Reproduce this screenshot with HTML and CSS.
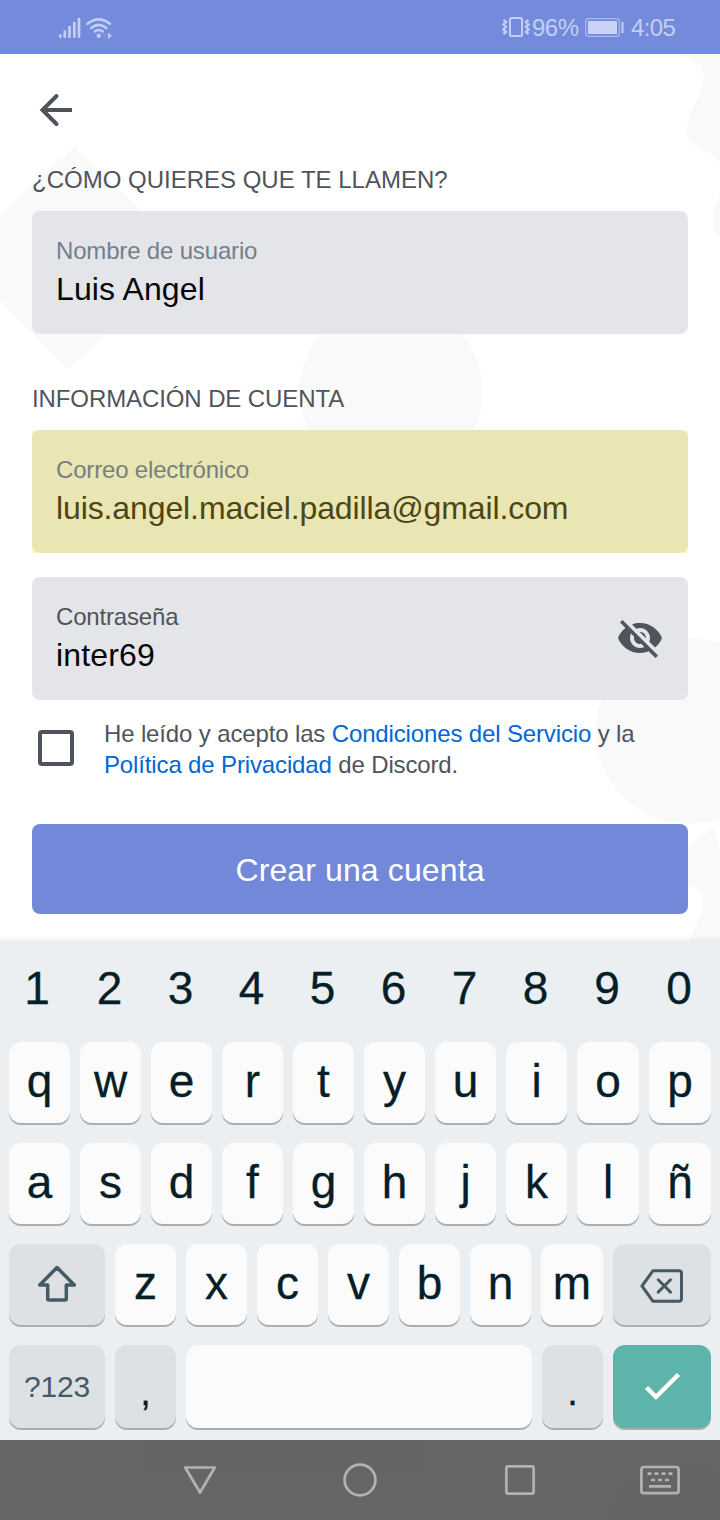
FILE: index.html
```html
<!DOCTYPE html>
<html lang="es">
<head>
<meta charset="utf-8">
<title>Crear una cuenta</title>
<link rel="stylesheet" href="styles.css">
</head>
<body>
<header class="status">
  <svg class="signal" width="56" height="26" viewBox="57 14 56 26" fill="none" stroke="#c3cff4" stroke-linecap="round">
    <path stroke-width="2.7" d="M60.3 34.5v1.2M64.8 30.5v5.2M69.5 26.2v9.5M74.3 22v13.7M79 18.2v17.5"/>
    <path stroke-width="2.6" d="M87.5 22.8q11.3-9 22.3 0M91.2 27q7.7-6.3 15.2 0M94.9 30.4q3.9-2.8 7.7 0"/>
    <circle cx="98.7" cy="34.7" r="2.2" fill="#c3cff4" stroke="none"/>
    <path fill="#c3cff4" stroke="none" d="M108 31.5l3.8 3.2-3.8 3.2z"/>
    <path fill="#8497e0" stroke="none" d="M106.3 31.5l-3.8 3.2 3.8 3.2z"/>
  </svg>
  <div class="status-right">
    <svg width="28" height="24" viewBox="502 15 28 24" fill="none" stroke="#c3cff4" stroke-width="2">
      <rect x="510" y="18" width="12" height="18" rx="1.5"/>
      <path stroke-width="2.4" d="M503.500 20l2.500 2-2.500 2.500 2.500 2.500-2.500 2.500 2.500 2.500-2.500 2M528.500 20l-2.500 2 2.500 2.500-2.500 2.500 2.500 2.500-2.500 2.500 2.500 2"/>
    </svg>
    <span class="percent">96%</span>
    <svg class="battery" width="40" height="22" viewBox="584 16 40 22" fill="none">
      <rect x="585.7" y="18.700" width="33.600" height="17.600" rx="3" stroke="#a9b8ed" stroke-width="1.300"/>
      <rect x="588" y="21" width="29" height="13" fill="#c8d3f5"/>
      <path stroke="#b7c4f1" stroke-width="2.500" d="M622.500 22v11"/>
    </svg>
    <span class="time">4:05</span>
  </div>
</header>
<main class="screen">
  <svg class="shapes" width="720" height="887" viewBox="0 54 720 887" fill="#f9f9f9">
    <path d="M74 147L190 257 68 369-45 257z"/>
    <circle cx="391" cy="392" r="91.500"/>
    <circle cx="689" cy="731" r="93"/>
    <path d="M680 54C698 59 705 66 703.500 79C701 97 687 114 687 130C687 141 694 147 703 150Q713 153 720 163V54z"/>
    <path d="M720 195Q713 206 713 220Q713 232 720 238z"/>
    <path d="M677 854L714 827 720 850V941H690L702 908Q707 890 688 884H677z"/>
  </svg>
  <svg class="back" width="36" height="36" viewBox="38 92 36 36" fill="none" stroke="#4f545c" stroke-width="4">
    <path d="M72 110H43"/><path d="M56.500 96L42.500 110 56.500 124" stroke-linecap="round"/>
  </svg>
  <h2 class="heading heading-name">¿CÓMO QUIERES QUE TE LLAMEN?</h2>
  <section class="field">
    <div class="label">Nombre de usuario</div>
    <div class="value value-name">Luis Angel</div>
  </section>
  <h2 class="heading heading-account">INFORMACIÓN DE CUENTA</h2>
  <div class="autofill">
    <section class="field field-mail">
      <div class="label label-mail">Correo electrónico</div>
      <div class="value value-mail">luis.angel.maciel.padilla@gmail.com</div>
    </section>
  </div>
  <section class="field field-password">
    <div>
      <div class="label label-dark">Contraseña</div>
      <div class="value value-password">inter69</div>
    </div>
    <svg width="48" height="48" viewBox="0 0 24 24" fill="#4f545c">
      <path d="M12 7c2.760 0 5 2.240 5 5 0 .650-.130 1.260-.360 1.830l2.920 2.920c1.510-1.260 2.700-2.890 3.430-4.750-1.730-4.390-6-7.500-11-7.500-1.400 0-2.740.250-3.980.700l2.160 2.160C10.740 7.130 11.350 7 12 7zM2 4.270l2.280 2.280.460.460C3.080 8.300 1.780 10.020 1 12c1.730 4.390 6 7.500 11 7.500 1.550 0 3.030-.300 4.380-.840l.420.420L19.730 22 21 20.730 3.270 3 2 4.270zM7.530 9.800l1.550 1.550c-.050.210-.080.430-.080.650 0 1.660 1.340 3 3 3 .220 0 .440-.030.650-.080l1.550 1.550c-.670.330-1.410.530-2.200.530-2.760 0-5-2.240-5-5 0-.790.200-1.530.530-2.200zm4.310-.780l3.150 3.150.020-.160c0-1.660-1.340-3-3-3l-.170.010z"/>
    </svg>
  </section>
  <div class="terms">
    <span class="checkbox"></span>
    <p class="terms-text">He leído y acepto las <a>Condiciones del Servicio</a> y la<br><a>Política de Privacidad</a> de Discord.</p>
  </div>
  <div class="submit">Crear una cuenta</div>
</main>
<section class="keyboard">
  <div class="row digits"><span class="digit-one">1</span><span>2</span><span>3</span><span>4</span><span>5</span><span>6</span><span>7</span><span>8</span><span>9</span><span>0</span></div>
  <div class="row"><span class="key">q</span><span class="key">w</span><span class="key">e</span><span class="key">r</span><span class="key">t</span><span class="key">y</span><span class="key">u</span><span class="key">i</span><span class="key">o</span><span class="key">p</span></div>
  <div class="row"><span class="key">a</span><span class="key">s</span><span class="key">d</span><span class="key">f</span><span class="key">g</span><span class="key">h</span><span class="key">j</span><span class="key">k</span><span class="key">l</span><span class="key">ñ</span></div>
  <div class="row row-lower">
    <span class="key key-gray"><svg width="42" height="42" viewBox="36 1263 42 42" fill="none" stroke="#455a64" stroke-width="3.500" stroke-linejoin="round"><path d="M57 1267.500L74.300 1285H66.300V1298.500Q66.300 1300 64.800 1300H49.200Q47.700 1300 47.700 1298.500V1285H39.700z"/></svg></span>
    <span class="key">z</span><span class="key">x</span><span class="key">c</span><span class="key">v</span><span class="key">b</span><span class="key">n</span><span class="key">m</span>
    <span class="key key-gray"><svg width="46" height="38" viewBox="639 1267 46 38" fill="none" stroke="#455a64" stroke-width="3" stroke-linejoin="round" stroke-linecap="round"><path d="M653 1270.700H679Q681.500 1270.700 681.500 1273.200V1298.800Q681.500 1301.300 679 1301.300H653L642 1286z"/><path d="M658.200 1279.800L670.500 1292.100M670.500 1279.800L658.200 1292.100"/></svg></span>
  </div>
  <div class="row row-bottom">
    <span class="key key-gray key-symbols">?123</span>
    <span class="key key-gray key-punct">,</span>
    <span class="key"></span>
    <span class="key key-gray key-punct">.</span>
    <span class="key key-enter"><svg width="38" height="30" viewBox="643 1372 38 30" fill="none" stroke="#fff" stroke-width="4.400"><path d="M646.500 1387.500L656 1397 678.500 1374.500"/></svg></span>
  </div>
</section>
<nav class="navbar">
  <svg width="720" height="80" viewBox="0 1440 720 80" fill="none" stroke="#b2b2b2" stroke-width="2.700" stroke-linejoin="round">
    <path fill="#656565" stroke="none" d="M143 1440H428V1472H143zM603 1520Q620 1464 689 1464Q706 1464 720 1469V1520z"/>
    <path d="M185.200 1467.500H214.800L200 1492.500z"/>
    <circle cx="360" cy="1480" r="15.400"/>
    <rect x="506.400" y="1466.400" width="27.200" height="27.200" rx="1"/>
    <rect x="641.400" y="1467" width="37.200" height="26.200" rx="2.500"/>
    <path d="M647.500 1473.700h4m3 0h4m3 0h4m3 0h4M651 1480h4m3 0h4m3 0h4M649 1486.300h22"/>
  </svg>
</nav>
</body>
</html>
```
FILE: styles.css
```css
* { box-sizing: border-box; }
body {
  margin: 0;
  width: 720px;
  height: 1520px;
  overflow: hidden;
  background: #fff;
  font-family: "Liberation Sans", Arial, sans-serif;
  font-size: 24px;
}
svg { display: block; flex: none; }
.status {
  height: 54px;
  padding: 0 44px 0 57px;
  display: flex;
  align-items: center;
  justify-content: space-between;
  background: #738bda;
  color: #c3cff4;
}
.status-right { display: flex; align-items: center; }
.percent { width: 51px; margin-left: 2px; padding-top: 1px; letter-spacing: -0.5px; }
.battery { margin-left: 1px; }
.time { width: 45px; margin-left: 7px; padding-top: 1px; letter-spacing: -0.6px; }
.signal { margin-top: 1px; }
.screen {
  position: relative;
  z-index: 0;
  height: 887px;
  padding: 38px 32px 0;
  color: #4f545c;
}
.screen::after {
  content: "";
  position: absolute;
  left: 0;
  right: 0;
  bottom: 0;
  height: 6px;
  background: linear-gradient(rgba(0, 0, 0, 0), rgba(0, 0, 0, 0.05));
}
.shapes { position: absolute; left: 0; top: 0; z-index: -1; }
.back { margin-left: 6px; }
.heading {
  margin: 0;
  height: 28px;
  line-height: 28px;
  font-size: 24px;
  font-weight: 400;
  white-space: nowrap;
}
.heading-name { margin-top: 38px; margin-bottom: 17px; }
.heading-account { margin-top: 51px; margin-bottom: 17px; letter-spacing: -0.1px; }
.field {
  height: 123px;
  padding: 26px 24px 0;
  border-radius: 8px;
  background: #e3e5e9;
}
.autofill { background: #fbf8c8; }
.field-mail { background: #e9e6b4; }
.field-password {
  display: flex;
  justify-content: space-between;
  margin-top: 24px;
}
.field-password svg { margin-top: 11px; }
.label { line-height: 28px; letter-spacing: -0.17px; color: #747f8d; }
.label-mail { color: #76807f; }
.label-dark { color: #4f545c; }
.value { margin-top: 5px; font-size: 32px; line-height: 38px; color: #060607; white-space: nowrap; }
.value-name { letter-spacing: 0.12px; }
.value-mail { color: #4e4613; letter-spacing: -0.11px; }
.value-password { letter-spacing: 0.14px; }
.terms { display: flex; margin-top: 18px; }
.checkbox { width: 36px; height: 36px; margin: 12px 30px 0 6px; border: 4px solid #4f545c; border-radius: 4px; }
.terms-text { margin: 0; line-height: 31px; letter-spacing: -0.14px; white-space: nowrap; }
.terms a { color: #0067d6; }
.submit {
  height: 90px;
  margin-top: 44px;
  padding-top: 1px;
  border-radius: 8px;
  background: #7289da;
  color: #fff;
  font-size: 32px;
  line-height: 90px;
  letter-spacing: 0.12px;
  text-align: center;
}
.keyboard {
  height: 499px;
  padding: 6px 9px 0;
  background: #ebeff2;
  color: #061e28;
  font-size: 46px;
}
.row {
  display: grid;
  grid-template-columns: repeat(8, 61px) 62px 62px;
  column-gap: 10px;
  height: 81px;
  margin-bottom: 20px;
  line-height: 78px;
  text-align: center;
  -webkit-text-stroke: 0.3px #061e28;
}
.digits { height: 75px; line-height: 83px; }
.digits span { padding-right: 2px; }
.digits .digit-one { padding-right: 5px; }
.row-lower { grid-template-columns: 96px repeat(6, 61px) 62px 98px; }
.row-bottom { grid-template-columns: 96px 61px 346px 61px 98px; height: 83px; margin: 0; }
.key { height: 100%; border-radius: 12px; background: #fbfbfb; box-shadow: 0 2px 0 #abaeb0; min-width: 0; }
.row-bottom { grid-template-rows: 83px; }
.key svg { margin: 0 auto; }
.key-gray { background: #dde1e4; }
.key-gray svg { margin-top: 19px; }
.row-lower .key-gray:last-child svg { margin-top: 23px; }
.key-symbols { font-size: 30px; line-height: 83px; color: #455a64; -webkit-text-stroke: 0; letter-spacing: -0.2px; }
.key-punct { font-size: 38px; line-height: 94px; }
.key-enter { background: #5cb4aa; }
.key-enter svg { margin-top: 27px; }
.navbar { position: relative; height: 80px; background: #666; }
```
